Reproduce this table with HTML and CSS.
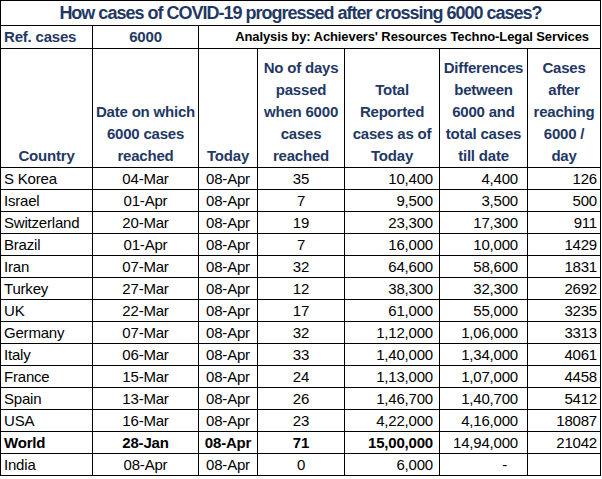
FILE: index.html
```html
<!DOCTYPE html>
<html>
<head>
<meta charset="utf-8">
<link rel="stylesheet" href="styles.css">
</head>
<body>
<table class="sheet">
  <colgroup>
    <col class="c1"><col class="c2"><col class="c3"><col class="c4"><col class="c5"><col class="c6"><col class="c7">
  </colgroup>
  <tr class="title-row"><td colspan="7" class="title">How cases of COVID-19 progressed after crossing 6000 cases?</td></tr>
  <tr class="ref-row">
    <td class="ref">Ref. cases</td>
    <td class="ref center">6000</td>
    <td colspan="5" class="credit">Analysis by: Achievers' Resources Techno-Legal Services</td>
  </tr>
  <tr class="head-row">
    <td class="hd">Country</td>
    <td class="hd">Date on which 6000 cases reached</td>
    <td class="hd">Today</td>
    <td class="hd">No of days passed when 6000 cases reached</td>
    <td class="hd">Total Reported cases as of Today</td>
    <td class="hd">Differences between 6000 and total cases till date</td>
    <td class="hd hd-narrow">Cases after reaching 6000 / day</td>
  </tr>
  <tr><td class="name">S Korea</td><td class="center">04-Mar</td><td class="center">08-Apr</td><td class="center">35</td><td class="tot">10,400</td><td class="diff">4,400</td><td class="rate">126</td></tr>
  <tr><td class="name">Israel</td><td class="center">01-Apr</td><td class="center">08-Apr</td><td class="center">7</td><td class="tot">9,500</td><td class="diff">3,500</td><td class="rate">500</td></tr>
  <tr><td class="name">Switzerland</td><td class="center">20-Mar</td><td class="center">08-Apr</td><td class="center">19</td><td class="tot">23,300</td><td class="diff">17,300</td><td class="rate">911</td></tr>
  <tr><td class="name">Brazil</td><td class="center">01-Apr</td><td class="center">08-Apr</td><td class="center">7</td><td class="tot">16,000</td><td class="diff">10,000</td><td class="rate">1429</td></tr>
  <tr><td class="name">Iran</td><td class="center">07-Mar</td><td class="center">08-Apr</td><td class="center">32</td><td class="tot">64,600</td><td class="diff">58,600</td><td class="rate">1831</td></tr>
  <tr><td class="name">Turkey</td><td class="center">27-Mar</td><td class="center">08-Apr</td><td class="center">12</td><td class="tot">38,300</td><td class="diff">32,300</td><td class="rate">2692</td></tr>
  <tr><td class="name">UK</td><td class="center">22-Mar</td><td class="center">08-Apr</td><td class="center">17</td><td class="tot">61,000</td><td class="diff">55,000</td><td class="rate">3235</td></tr>
  <tr><td class="name">Germany</td><td class="center">07-Mar</td><td class="center">08-Apr</td><td class="center">32</td><td class="tot">1,12,000</td><td class="diff">1,06,000</td><td class="rate">3313</td></tr>
  <tr><td class="name">Italy</td><td class="center">06-Mar</td><td class="center">08-Apr</td><td class="center">33</td><td class="tot">1,40,000</td><td class="diff">1,34,000</td><td class="rate">4061</td></tr>
  <tr><td class="name">France</td><td class="center">15-Mar</td><td class="center">08-Apr</td><td class="center">24</td><td class="tot">1,13,000</td><td class="diff">1,07,000</td><td class="rate">4458</td></tr>
  <tr><td class="name">Spain</td><td class="center">13-Mar</td><td class="center">08-Apr</td><td class="center">26</td><td class="tot">1,46,700</td><td class="diff">1,40,700</td><td class="rate">5412</td></tr>
  <tr><td class="name">USA</td><td class="center">16-Mar</td><td class="center">08-Apr</td><td class="center">23</td><td class="tot">4,22,000</td><td class="diff">4,16,000</td><td class="rate">18087</td></tr>
  <tr class="world"><td class="name b">World</td><td class="center b">28-Jan</td><td class="center b">08-Apr</td><td class="center b">71</td><td class="tot b">15,00,000</td><td class="diff">14,94,000</td><td class="rate">21042</td></tr>
  <tr><td class="name">India</td><td class="center">08-Apr</td><td class="center">08-Apr</td><td class="center">0</td><td class="tot">6,000</td><td class="dash">-</td><td class="rate"></td></tr>
</table>
</body>
</html>
```

FILE: styles.css
```css
html, body {
  margin: 0;
  padding: 0;
  background: #ffffff;
}

.sheet {
  border-collapse: collapse;
  table-layout: fixed;
  width: 600px;
  font-family: "Liberation Sans", Arial, sans-serif;
  font-size: 15px;
  letter-spacing: -0.2px;
  color: #000;
}

.c1 { width: 92px; }
.c2 { width: 106px; }
.c3 { width: 59px; }
.c4 { width: 87px; }
.c5 { width: 95px; }
.c6 { width: 88px; }
.c7 { width: 73px; }

.sheet td {
  border: 1px solid #000;
  padding: 0 3px;
  height: 21px;
  line-height: 20px;
  white-space: nowrap;
  overflow: hidden;
}

.sheet .title-row td {
  height: 24px;
  line-height: 24px;
}

.title {
  text-align: center;
  font-weight: bold;
  font-size: 18px;
  color: #1f3864;
  letter-spacing: -1px;
}

.sheet .ref-row td {
  height: 22px;
}

.ref {
  font-weight: bold;
  color: #1f3864;
}

.credit {
  font-weight: bold;
  font-size: 13px;
  text-align: right;
  padding-right: 11px !important;
  letter-spacing: -0.1px;
}

.sheet .head-row td {
  height: 118px;
  vertical-align: bottom;
  white-space: normal;
  text-align: center;
  font-weight: bold;
  color: #1f3864;
  line-height: 22px;
  padding: 0 1px 0;
}

.sheet .head-row .hd-narrow {
  padding: 0 5px;
}

.center { text-align: center; }
.name { text-align: left; }
.tot { text-align: right; padding-right: 6px !important; }
.diff { text-align: right; padding-right: 9px !important; }
.rate { text-align: right; padding-right: 3px !important; }
.dash { text-align: right; padding-right: 20px !important; }
.b { font-weight: bold; }
```
